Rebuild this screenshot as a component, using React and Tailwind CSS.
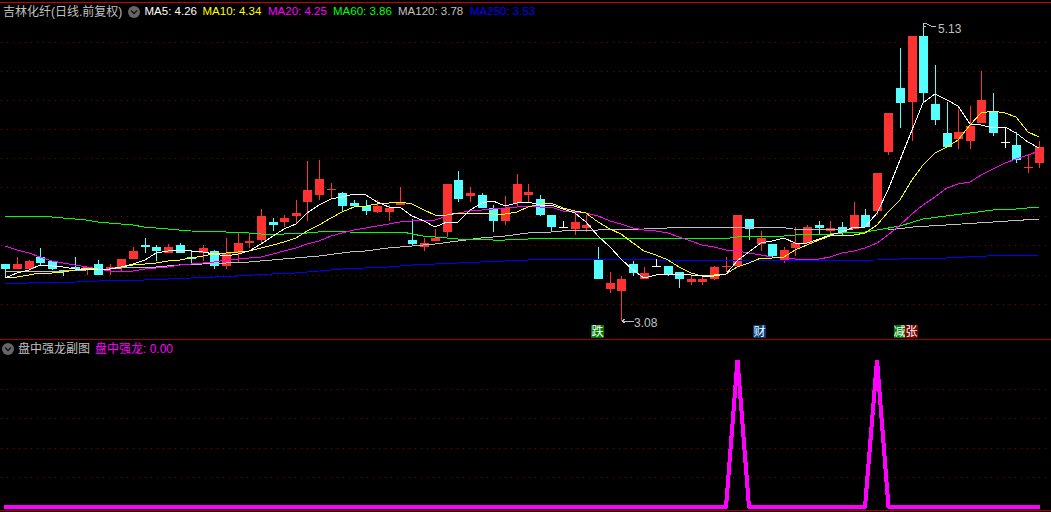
const R = "#ff3232", C = "#54ffff", W = "#ffffff";
const STEP = 11.62, X0 = 5.3;
const cx = (i) => Math.round(X0 + STEP * i);

const candles = [
  [C,264,264,269,277],[R,257,264,269,269],[R,260,261,269,269],[C,248,257,263,265],[C,261,261,269,270],
  [C,270,270,272,276],[C,257,267,269,270],[R,267,267,269,275],[C,260,264,275,275],[R,264,267,269,275],
  [R,259,259,267,272],[R,247,251,259,259],[C,238,245,247,253],[C,245,247,251,261],[R,244,247,253,253],
  [C,243,245,253,253],[C,250,257,259,263],[R,245,248,253,261],[C,250,251,266,269],[R,238,253,266,269],
  [R,233,243,253,262],[R,234,241,243,248],[R,209,216,240,243],[C,218,222,225,231],[R,215,218,222,227],
  [R,200,213,216,223],[R,161,190,202,221],[R,160,179,195,200],[R,183,189,190,198],[C,192,193,206,212],
  [C,200,203,206,206],[C,200,206,211,215],[R,200,206,212,213],[R,205,208,212,221],[R,187,202,205,205],
  [C,219,240,244,246],[R,238,243,247,251],[R,229,238,241,241],[R,184,184,232,237],[C,171,180,199,202],
  [R,187,193,196,202],[C,193,195,208,208],[C,205,208,221,232],[R,196,208,221,225],[R,174,184,203,206],
  [R,184,192,195,202],[C,195,199,215,216],[C,215,215,227,232],[W,221,227,228,228],[R,213,222,229,235],
  [R,215,225,228,232],[C,247,260,279,279],[R,272,283,289,293],[R,276,279,291,321],[C,261,264,273,276],
  [R,267,273,279,279],[W,259,266,267,267],[C,266,266,275,276],[C,272,272,279,288],[R,275,279,282,285],
  [R,276,279,282,285],[R,266,267,279,280],[R,257,266,267,272],[R,215,215,266,266],[C,219,219,229,240],
  [R,231,238,244,251],[C,244,244,256,258],[R,247,250,260,263],[R,227,243,248,256],[R,225,227,243,243],
  [C,221,225,228,234],[R,221,228,231,234],[C,222,227,233,235],[R,202,215,229,229],[C,209,215,227,227],
  [R,173,173,211,215],[R,113,113,152,155],[C,48,88,103,128],[R,36,36,102,141],[C,24,36,93,102],
  [C,65,104,120,125],[C,102,133,147,147],[R,109,132,139,149],[R,106,126,141,149],[R,71,100,123,123],
  [C,93,112,133,136],[W,127,142,143,148],[C,132,145,160,163],[R,154,167,168,173],[R,141,147,163,168],
];

const white = [278,273,270,265,266,267,269,269,269,269,267,264,260,253,251,250,251,252,254,256,254,251,244,236,229,224,213,205,199,197,194,195,202,207,207,216,221,227,222,222,210,203,201,206,203,202,205,205,209,213,222,236,247,259,270,278,275,274,274,275,276,276,274,261,252,243,241,238,243,243,239,235,232,227,227,213,190,160,130,103,94,100,106,124,125,128,127,133,142,148];
const yellow = [277,277,275,273,273,272,270,268,269,269,267,265,264,263,261,260,258,256,254,253,252,251,248,245,242,238,231,225,218,212,207,206,204,203,202,204,210,215,215,213,213,213,214,214,212,207,204,203,208,211,213,222,229,234,243,251,255,260,267,273,276,275,274,267,263,258,258,257,250,245,240,236,235,235,233,225,212,200,180,165,153,147,140,125,113,111,113,117,132,137];
const magenta = [246,250,253,257,261,263,265,267,269,271,271,271,269,268,267,265,264,263,262,260,259,258,257,254,251,248,244,241,236,233,230,228,226,224,222,221,220,220,216,213,211,210,209,208,207,206,207,207,211,212,213,216,221,224,228,230,231,233,237,241,245,247,250,251,253,255,257,258,259,259,259,257,253,251,248,243,235,225,214,205,197,188,184,182,175,169,163,159,155,151];
const green = [[5,216],[47,216],[52,217],[63,218],[75,219],[86,220],[98,222],[109,223],[121,224],[133,225],[144,227],[156,228],[168,229],[179,230],[191,231],[226,232],[249,233],[261,234],[284,234],[307,233],[330,231],[342,231],[350,232],[403,232],[412,234],[423,236],[435,237],[447,238],[458,239],[481,239],[493,240],[505,240],[516,239],[528,239],[540,238],[730,238],[737,237],[760,236],[784,236],[807,234],[830,234],[842,233],[865,232],[877,230],[900,226],[923,219],[946,216],[970,213],[993,210],[1016,209],[1039,207]];
const gray = [[5,272],[28,271],[63,271],[86,270],[109,269],[133,267],[156,267],[179,265],[202,264],[226,263],[249,262],[272,260],[295,258],[319,256],[342,253],[350,252],[365,251],[388,248],[412,246],[435,244],[458,241],[481,238],[505,236],[528,233],[551,232],[574,230],[598,230],[621,229],[644,229],[667,228],[691,227],[778,227],[793,229],[853,230],[888,230],[913,227],[946,225],[993,222],[1039,219]];
const blue = [[5,284],[28,283],[51,282],[75,282],[98,281],[121,280],[144,280],[168,279],[191,278],[214,277],[237,276],[272,274],[295,273],[319,271],[342,269],[365,268],[388,267],[412,265],[435,264],[458,263],[481,262],[505,261],[528,260],[551,259],[644,259],[656,260],[700,261],[877,260],[900,259],[923,258],[946,258],[987,256],[1039,255]];

const pts = (arr) => arr.map((y, i) => `${cx(i)},${y}`).join(" ");
const pairs = (arr) => arr.map((p) => p.join(",")).join(" ");

function Grid({ ys }) {
  return ys.map((y) => (
    <line key={y} x1="1" x2="1051" y1={y + 0.5} y2={y + 0.5} stroke="#8a0000" strokeWidth="1" strokeDasharray="1 5" />
  ));
}

function Chevron({ className }) {
  return (
    <span className={`flex h-3 w-3 shrink-0 items-center justify-center rounded-full bg-[#666666] ${className}`}>
      <svg width="8" height="6" viewBox="0 0 8 6"><path d="M1 1.5 L4 4.5 L7 1.5" fill="none" stroke="#111111" strokeWidth="1.3" /></svg>
    </span>
  );
}

function Ma({ color, width, children }) {
  return <span className={`shrink-0 text-[11.5px] ${color} ${width}`}>{children}</span>;
}

function Badge({ bg, left, width, children }) {
  return (
    <span className={`absolute top-[322px] flex h-[13px] items-center justify-center text-[12px] leading-none text-white ${bg} ${left} ${width}`}>
      {children}
    </span>
  );
}

const font = "font-['Liberation_Sans','Noto_Sans_CJK_SC',sans-serif]";

export default function App() {
  return (
    <div className={`flex h-[512px] w-[1051px] flex-col overflow-hidden bg-black text-[12px] ${font}`}>
      <section className="relative mt-[2px] h-[338px] shrink-0 border-t-[1px] border-b-[1px] border-t-[#c80000] border-b-[#a00000]">
        <svg className="absolute left-0 top-[-3px]" width="1051" height="340" viewBox="0 0 1051 340" shapeRendering="crispEdges">
          <Grid ys={[42, 71, 100, 129, 158, 187, 216, 245, 275, 304]} />
          {candles.map(([c, wt, bt, bb, wb], i) => {
            const x = cx(i);
            const h = Math.max(bb - bt, 1);
            return (
              <g key={i}>
                <rect x={x} y={wt} width="1" height={wb - wt} fill={c} />
                <rect x={x - 4} y={bt} width="9" height={h} fill={c} />
              </g>
            );
          })}
          <polyline points={pairs(blue)} fill="none" stroke="#0000ff" strokeWidth="1" />
          <polyline points={pairs(gray)} fill="none" stroke="#c0c0c0" strokeWidth="1" />
          <polyline points={pairs(green)} fill="none" stroke="#00ff00" strokeWidth="1" />
          <polyline points={pts(magenta)} fill="none" stroke="#ff00ff" strokeWidth="1" />
          <polyline points={pts(yellow)} fill="none" stroke="#ffff00" strokeWidth="1" />
          <polyline points={pts(white)} fill="none" stroke="#ffffff" strokeWidth="1" />
          <path d="M923 23 H927 M923 26 H926 M927 24 L931 26 L936 27" fill="none" stroke="#c0c0c0" strokeWidth="1" />
          <path d="M622 321 H634 M622 321 L625 319 M622 321 L625 323" fill="none" stroke="#c0c0c0" strokeWidth="1" />
          <text x="938" y="33" fill="#c0c0c0" fontSize="12">5.13</text>
          <text x="634" y="327" fill="#c0c0c0" fontSize="12">3.08</text>
        </svg>
        <header className="relative flex h-[18px] items-center pl-[3px] whitespace-nowrap">
          <span className="w-[125px] shrink-0 text-[#c0c0c0]">吉林化纤(日线.前复权)</span>
          <Chevron className="mr-[4.5px]" />
          <Ma color="text-white" width="w-[58px]">MA5: 4.26</Ma>
          <Ma color="text-[#ffff00]" width="w-[65.5px]">MA10: 4.34</Ma>
          <Ma color="text-[#ff00ff]" width="w-[65px]">MA20: 4.25</Ma>
          <Ma color="text-[#00ff00]" width="w-[65px]">MA60: 3.86</Ma>
          <Ma color="text-[#c0c0c0]" width="w-[72px]">MA120: 3.78</Ma>
          <Ma color="text-[#0000ff]" width="w-[70px]">MA250: 3.53</Ma>
        </header>
        <Badge bg="bg-[#007a00]" left="left-[591px]" width="w-[13px]">跌</Badge>
        <Badge bg="bg-[#003f7f]" left="left-[753px]" width="w-[13px]">财</Badge>
        <Badge bg="bg-[#007a00]" left="left-[894px]" width="w-[11px]">减</Badge>
        <Badge bg="bg-[#7f0000]" left="left-[905px]" width="w-[13px]">张</Badge>
      </section>
      <section className="relative h-[171px] shrink-0 border-b-[1px] border-[#a00000]">
        <svg className="absolute left-0 top-0" width="1051" height="170" viewBox="0 340 1051 170" shapeRendering="crispEdges">
          <Grid ys={[389, 418, 448, 477]} />
          <polyline
            points="4,507 726,507 737.5,360 749,507 865,507 877,360 888.5,507 1040,507"
            fill="none"
            stroke="#ff00ff"
            strokeWidth="4"
            strokeLinejoin="miter"
            strokeMiterlimit="1"
          />
        </svg>
        <header className="relative mt-[1px] flex h-4 items-center gap-[4px] pl-[2px] whitespace-nowrap">
          <Chevron />
          <span className="w-[73px] shrink-0 text-[#c0c0c0]">盘中强龙副图</span>
          <span className="text-[#ff00ff]">盘中强龙: 0.00</span>
        </header>
      </section>
    </div>
  );
}
